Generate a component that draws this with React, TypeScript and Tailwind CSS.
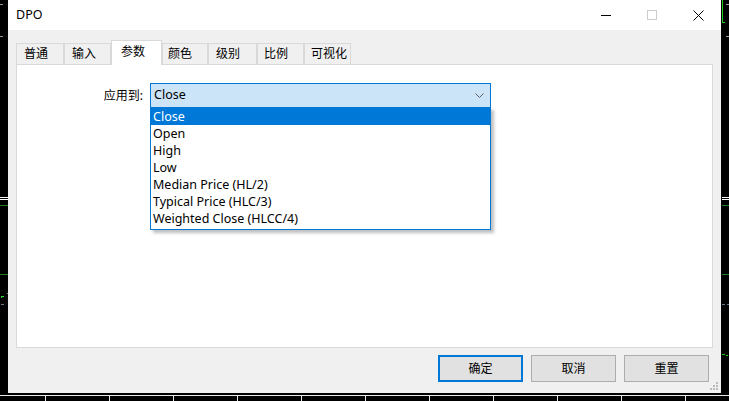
import React from "react";

const FONT = { fontFamily: '"Noto Sans", "Noto Sans CJK SC", sans-serif' };

const tabs = [
  { label: "普通", w: 48, pl: 7 },
  { label: "输入", w: 47, pl: 7 },
  { label: "参数", w: 51, pl: 9, active: true },
  { label: "颜色", w: 46, pl: 5 },
  { label: "级别", w: 49, pl: 7 },
  { label: "比例", w: 47, pl: 6 },
  { label: "可视化", w: 47, pl: 6 },
];

const options = [
  "Close",
  "Open",
  "High",
  "Low",
  "Median Price (HL/2)",
  "Typical Price (HLC/3)",
  "Weighted Close (HLCC/4)",
];

function Background() {
  const ticks = [45, 109, 173, 237, 301, 365, 429, 493, 557, 621, 685];
  return (
    <svg className="absolute inset-0" width={729} height={401} shapeRendering="crispEdges">
      <rect x={0} y={4} width={3} height={1} fill="#9a9a9a" />
      <rect x={0} y={36} width={3} height={1} fill="#9a9a9a" />
      <rect x={0} y={197} width={8} height={1} fill="#ffffff" />
      <rect x={0} y={199} width={8} height={1} fill="#ffffff" />
      <rect x={0} y={205} width={8} height={1} fill="#1f7a1f" />
      <rect x={0} y={274} width={8} height={1} fill="#1f7a1f" />
      <rect x={7} y={293} width={1} height={1} fill="#6a7a8a" />
      <rect x={1} y={296} width={3} height={1} fill="#22dd22" />
      <rect x={1} y={297} width={1} height={1} fill="#22dd22" />
      <rect x={1} y={304} width={3} height={1} fill="#6a7a8a" />
      <rect x={722} y={0} width={1} height={22} fill="#22cc22" />
      <rect x={722} y={22} width={3} height={1} fill="#22cc22" />
      <rect x={726} y={4} width={3} height={1} fill="#9a9a9a" />
      <rect x={726} y={36} width={3} height={1} fill="#9a9a9a" />
      <rect x={722} y={197} width={7} height={1} fill="#ffffff" />
      <rect x={722} y={199} width={7} height={1} fill="#ffffff" />
      <rect x={722} y={205} width={7} height={1} fill="#1f7a1f" />
      <rect x={722} y={274} width={7} height={1} fill="#1f7a1f" />
      <rect x={722} y={304} width={3} height={1} fill="#6a7a8a" />
      <rect x={727} y={304} width={2} height={1} fill="#6a7a8a" />
      <rect x={722} y={354} width={3} height={1} fill="#22cc22" />
      <rect x={726} y={355} width={2} height={1} fill="#22dd22" />
      <rect x={0} y={395} width={729} height={1} fill="#e8e8e8" />
      {ticks.map((x) => (
        <rect key={x} x={x} y={396} width={1} height={5} fill="#e8e8e8" />
      ))}
    </svg>
  );
}

export default function App() {
  return (
    <div className="relative w-[729px] h-[401px] bg-black overflow-hidden text-[12px] text-black" style={FONT}>
      <Background />
      <div className="relative ml-[8px] w-[713px] h-[393px] bg-[#f0f0f0] flex flex-col">
        {/* title bar */}
        <div className="h-[30px] bg-white flex items-center justify-between">
          <span className="pl-[8px] text-[12.5px] leading-none">DPO</span>
          <div className="flex items-center h-full">
            <div className="w-[46px] h-full flex items-center justify-center">
              <div className="w-[10px] h-px bg-black" />
            </div>
            <div className="w-[46px] h-full flex items-center justify-center">
              <div className="w-[10px] h-[10px] border border-[#cccccc]" />
            </div>
            <div className="w-[46px] h-full flex items-center justify-center">
              <svg width="11" height="11" viewBox="0 0 11 11">
                <path d="M0.5 0.5 L10.5 10.5 M10.5 0.5 L0.5 10.5" stroke="#000" strokeWidth="1" />
              </svg>
            </div>
          </div>
        </div>

        {/* tabs */}
        <div className="mt-[10px] ml-[8px] h-[24px] flex items-end relative z-10">
          {tabs.map((t) =>
            t.active ? (
              <div
                key={t.label}
                className="h-[25px] -mb-px bg-white border border-b-0 border-[#d9d9d9] flex items-center leading-none"
                style={{ width: t.w, paddingLeft: t.pl }}
              >
                <span className="-mt-[2px]">{t.label}</span>
              </div>
            ) : (
              <div
                key={t.label}
                className="h-[21px] bg-[#f0f0f0] border border-b-0 border-[#d9d9d9] flex items-center leading-none"
                style={{ width: t.w, paddingLeft: t.pl }}
              >
                {t.label}
              </div>
            )
          )}
        </div>

        {/* panel */}
        <div className="mx-[8px] h-[284px] bg-white border border-[#d9d9d9] relative">
          <div className="flex items-center mt-[18px]">
            <div className="w-[126px] text-right leading-none">应用到:</div>
            <div className="ml-[7px] relative">
              <div className="w-[341px] h-[25px] bg-[#cce4f7] border border-[#0078d7] flex items-center justify-between pl-[3px] pr-[6px] text-[12.5px]">
                <span>Close</span>
                <svg width="9" height="6" viewBox="0 0 9 6">
                  <path d="M0.5 0.5 L4.5 4.5 L8.5 0.5" fill="none" stroke="#606060" strokeWidth="1" />
                </svg>
              </div>
              <div className="absolute left-0 top-[24px] w-[341px] bg-white border border-[#0078d7] shadow-[3px_3px_3px_rgba(0,0,0,0.25)] pb-[2px] z-20 text-[12.5px]">
                {options.map((o, i) => (
                  <div
                    key={o}
                    className={
                      i === 0
                        ? "h-[17px] leading-[17px] pl-[2px] bg-[#0078d7] text-white"
                        : "h-[17px] leading-[17px] pl-[2px]"
                    }
                  >
                    {o}
                  </div>
                ))}
              </div>
            </div>
          </div>
        </div>

        {/* buttons */}
        <div className="mt-[7px] flex justify-end gap-[8px] pr-[12px]">
          <button className="w-[85px] h-[27px] bg-[#e1e1e1] border-2 border-[#0078d7] flex items-center justify-center">
            确定
          </button>
          <button className="w-[85px] h-[27px] bg-[#e1e1e1] border border-[#adadad] flex items-center justify-center">
            取消
          </button>
          <button className="w-[85px] h-[27px] bg-[#e1e1e1] border border-[#adadad] flex items-center justify-center">
            重置
          </button>
        </div>

        {/* resize grip */}
        <svg className="absolute right-[3px] bottom-[3px]" width="8" height="8" shapeRendering="crispEdges">
          <rect x="6" y="0" width="2" height="2" fill="#bcbcbc" />
          <rect x="3" y="3" width="2" height="2" fill="#bcbcbc" />
          <rect x="6" y="3" width="2" height="2" fill="#bcbcbc" />
          <rect x="0" y="6" width="2" height="2" fill="#bcbcbc" />
          <rect x="3" y="6" width="2" height="2" fill="#bcbcbc" />
          <rect x="6" y="6" width="2" height="2" fill="#bcbcbc" />
        </svg>
      </div>
    </div>
  );
}
